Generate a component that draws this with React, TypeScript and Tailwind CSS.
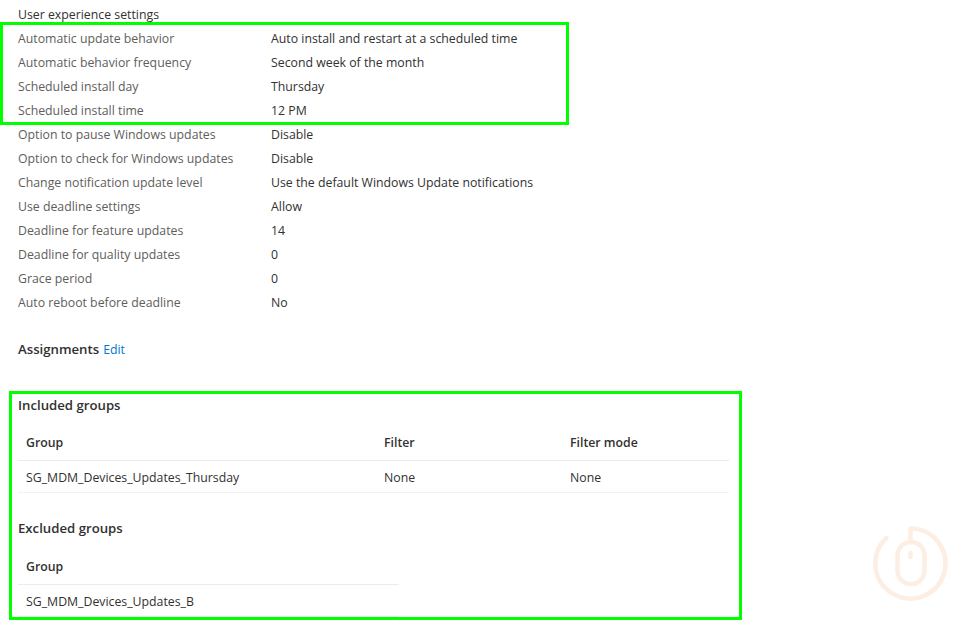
const settings = [
  ['Automatic update behavior', 'Auto install and restart at a scheduled time'],
  ['Automatic behavior frequency', 'Second week of the month'],
  ['Scheduled install day', 'Thursday'],
  ['Scheduled install time', '12 PM'],
  ['Option to pause Windows updates', 'Disable'],
  ['Option to check for Windows updates', 'Disable'],
  ['Change notification update level', 'Use the default Windows Update notifications'],
  ['Use deadline settings', 'Allow'],
  ['Deadline for feature updates', '14'],
  ['Deadline for quality updates', '0'],
  ['Grace period', '0'],
  ['Auto reboot before deadline', 'No'],
];

function MouseMark() {
  return (
    <svg
      className="absolute left-[853px] top-[506px] w-[120px] h-[120px]"
      viewBox="0 0 120 120"
      fill="none"
      stroke="#fdeee3"
      strokeWidth="4.5"
      strokeLinecap="round"
    >
      <path d="M57.5 22.5A35 35 0 1 1 33.5 32" />
      <path d="M57.5 22.5V36" />
      <rect x="44.5" y="36" width="27" height="42" rx="13.5" />
      <path d="M57.5 47V51" />
    </svg>
  );
}

export default function App() {
  return (
    <div className="relative w-[973px] h-[626px] overflow-hidden bg-white pl-[18px] text-[12.3px] text-[#323130] font-['Open_Sans','Noto_Sans',sans-serif]">
      {/* Settings */}
      <div className="h-[27px] pt-[3px] leading-6">User experience settings</div>
      <div>
        {settings.map(([label, value]) => (
          <div key={label} className="flex h-6 items-center">
            <div className="w-[253px] text-[#605e5c]">{label}</div>
            <div>{value}</div>
          </div>
        ))}
      </div>

      {/* Assignments */}
      <div className="mt-[23px] flex h-6 items-center gap-1">
        <span className="text-[13.2px] font-semibold">Assignments</span>
        <span className="text-[#0078d4]">Edit</span>
      </div>

      <div className="mt-[31px] h-6 leading-6 text-[13.2px] font-semibold">Included groups</div>
      <div className="mt-[12px] w-[711px]">
        <div className="flex h-[32px] items-center border-b border-[#edebe9] pb-[2px] pl-2 font-semibold">
          <div className="w-[358px]">Group</div>
          <div className="w-[186px]">Filter</div>
          <div>Filter mode</div>
        </div>
        <div className="flex h-[32px] items-center border-b border-[#f3f2f1] pl-2 pt-[3px]">
          <div className="w-[358px]">SG_MDM_Devices_Updates_Thursday</div>
          <div className="w-[186px]">None</div>
          <div>None</div>
        </div>
      </div>

      <div className="mt-[23px] h-6 leading-6 text-[13.2px] font-semibold">Excluded groups</div>
      <div className="mt-[13px] w-[381px]">
        <div className="flex h-[32px] items-center border-b border-[#edebe9] pb-[2px] pl-2 font-semibold">
          Group
        </div>
        <div className="flex h-[32px] items-center border-b border-[#f3f2f1] pl-2 pt-[3px]">
          SG_MDM_Devices_Updates_B
        </div>
      </div>

      {/* Highlight boxes drawn over the screenshot */}
      <div className="absolute left-0 top-[22px] w-[569px] h-[103px] border-[3px] border-[#00ff00]" />
      <div className="absolute left-[9px] top-[391px] w-[733px] h-[229px] border-[3px] border-[#00ff00]" />
      <MouseMark />
    </div>
  );
}
